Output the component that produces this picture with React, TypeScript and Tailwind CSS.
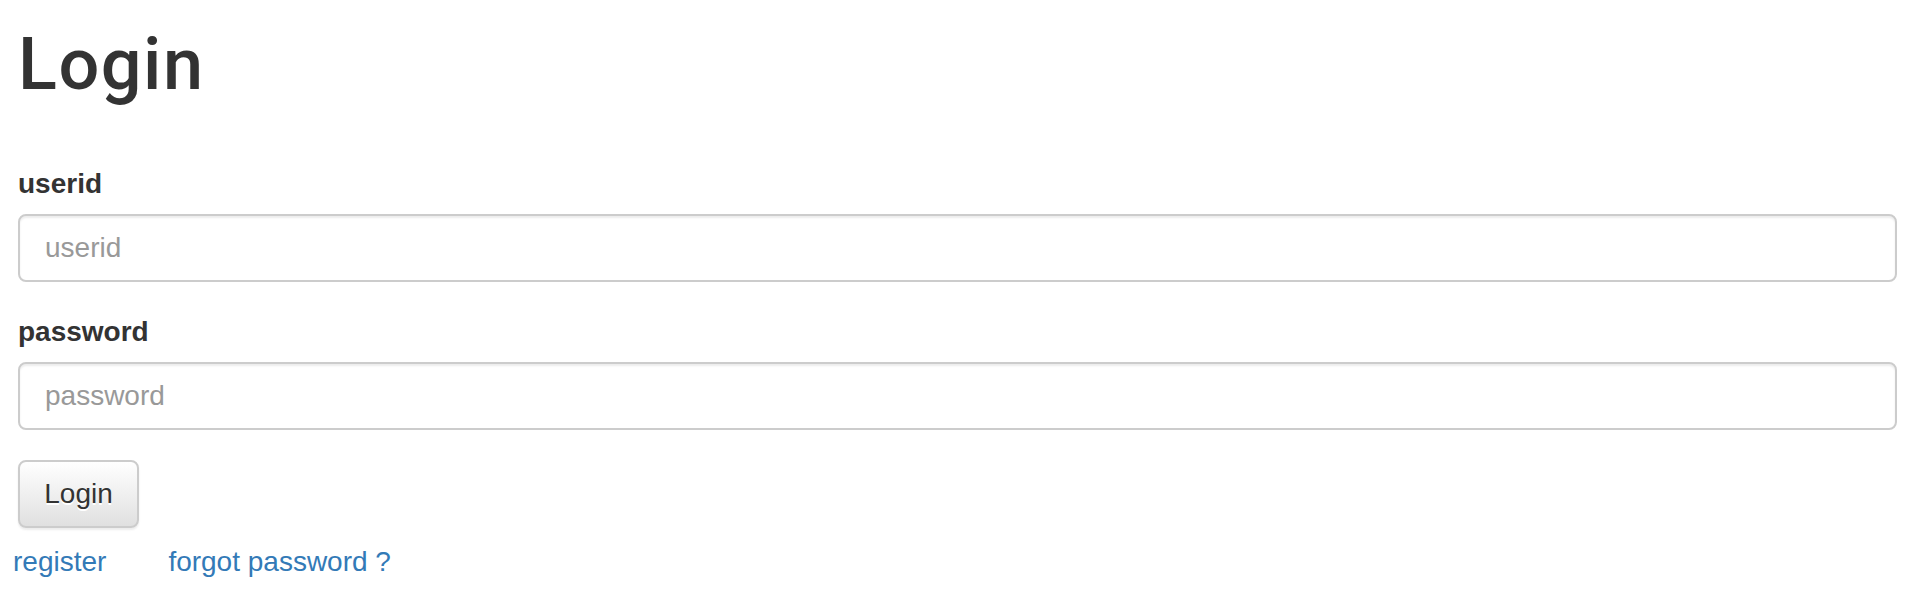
import React, { useState } from 'react';

const font = { fontFamily: '"Liberation Sans", Arial, Helvetica, sans-serif' };

const App: React.FC = () => {
  const [userid, setUserid] = useState('');
  const [password, setPassword] = useState('');

  return (
    <div className="min-h-screen bg-white text-[#333] pl-[18px] pr-[25px]" style={font}>
      <h1
        className="pt-[25px] text-[72px] leading-[79px] font-medium tracking-[1.5px] text-[#333] m-0"
        style={{ fontFamily: 'Roboto, "Liberation Sans", Arial, sans-serif' }}
      >
        Login
      </h1>

      <form className="mt-[60px]" onSubmit={(e) => e.preventDefault()}>
        <div className="mb-[30px]">
          <label htmlFor="userid" className="block text-[28px] leading-[40px] font-bold mb-[10px]">
            userid
          </label>
          <input
            id="userid"
            type="text"
            value={userid}
            onChange={(e) => setUserid(e.target.value)}
            placeholder="userid"
            className="block w-full h-[68px] px-[25px] text-[28px] text-[#555] placeholder:text-[#999] bg-white border-2 border-[#ccc] rounded-[8px] shadow-[inset_0_2px_2px_rgba(0,0,0,0.075)] outline-none"
          />
        </div>

        <div className="mb-[30px]">
          <label htmlFor="password" className="block text-[28px] leading-[40px] font-bold mb-[10px]">
            password
          </label>
          <input
            id="password"
            type="password"
            value={password}
            onChange={(e) => setPassword(e.target.value)}
            placeholder="password"
            className="block w-full h-[68px] px-[25px] text-[28px] text-[#555] placeholder:text-[#999] bg-white border-2 border-[#ccc] rounded-[8px] shadow-[inset_0_2px_2px_rgba(0,0,0,0.075)] outline-none"
          />
        </div>

        <button
          type="submit"
          className="h-[68px] w-[121px] text-[28px] leading-[40px] text-[#333] border-2 border-[#ccc] rounded-[8px] bg-gradient-to-b from-white to-[#e0e0e0] [text-shadow:0_2px_0_#fff] shadow-[inset_0_2px_0_rgba(255,255,255,0.15),0_2px_2px_rgba(0,0,0,0.075)]"
        >
          Login
        </button>
      </form>

      <div className="flex ml-[-5px] mt-[14px] text-[28px] leading-[40px] text-[#337ab7]">
        <a href="#" className="hover:underline">register</a>
        <a href="#" className="ml-[62px] hover:underline">forgot password ?</a>
      </div>
    </div>
  );
};

export default App;
